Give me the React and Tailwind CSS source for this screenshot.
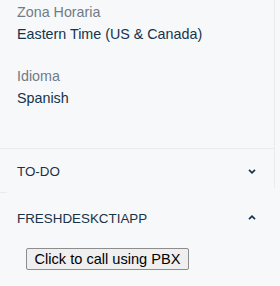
import React from "react";

function Chevron({ up }) {
  return (
    <svg width="8" height="5" viewBox="0 0 8 5" className="block">
      <polyline
        points={up ? "1,4.2 4,1.2 7,4.2" : "1,0.8 4,3.8 7,0.8"}
        fill="none"
        stroke="#183247"
        strokeWidth="1.7"
      />
    </svg>
  );
}

export default function App() {
  return (
    <div className="w-[280px] h-[286px] overflow-hidden bg-[#f7f8f9] font-['Liberation_Sans',Arial,sans-serif]">
      <div className="w-[275px] border-r border-[#e9ecef]">
        <div className="h-[149px] border-b border-[#e9ecef] pl-[17px] pt-[2px]">
          <div className="text-[14.3px] leading-[20px] text-[#6f7c87]">Zona Horaria</div>
          <div className="mt-[2px] text-[14.3px] leading-[20px] text-[#12344d]">Eastern Time (US &amp; Canada)</div>
          <div className="mt-[22px] text-[14.3px] leading-[20px] text-[#6f7c87]">Idioma</div>
          <div className="mt-[2px] text-[14.3px] leading-[20px] text-[#12344d]">Spanish</div>
        </div>
        <div className="h-[39px] pl-[17px] pr-[18px] pt-[13px] flex justify-between">
          <span className="text-[13.4px] leading-[20px] text-[#183247]">TO-DO</span>
          <span className="pt-[7px]"><Chevron /></span>
        </div>
      </div>
      <div className="h-[4px]" />
      <div className="w-[7px] h-px bg-[#e9ecef]" />
      <div className="w-[274px] pl-[17px] pr-[18px] pt-[16px] flex justify-between">
        <span className="text-[13.4px] leading-[20px] text-[#183247]">FRESHDESKCTIAPP</span>
        <span className="pt-[6px]"><Chevron up /></span>
      </div>
      <div className="pl-[26px] pt-[19px]">
        <button className="w-[163px] h-[22px] flex items-center justify-center bg-[#efefef] border border-[#8d8d8d] rounded-[2px] text-black text-[14.6px] leading-none font-['Liberation_Sans',Arial,sans-serif]">
          Click to call using PBX
        </button>
      </div>
    </div>
  );
}
